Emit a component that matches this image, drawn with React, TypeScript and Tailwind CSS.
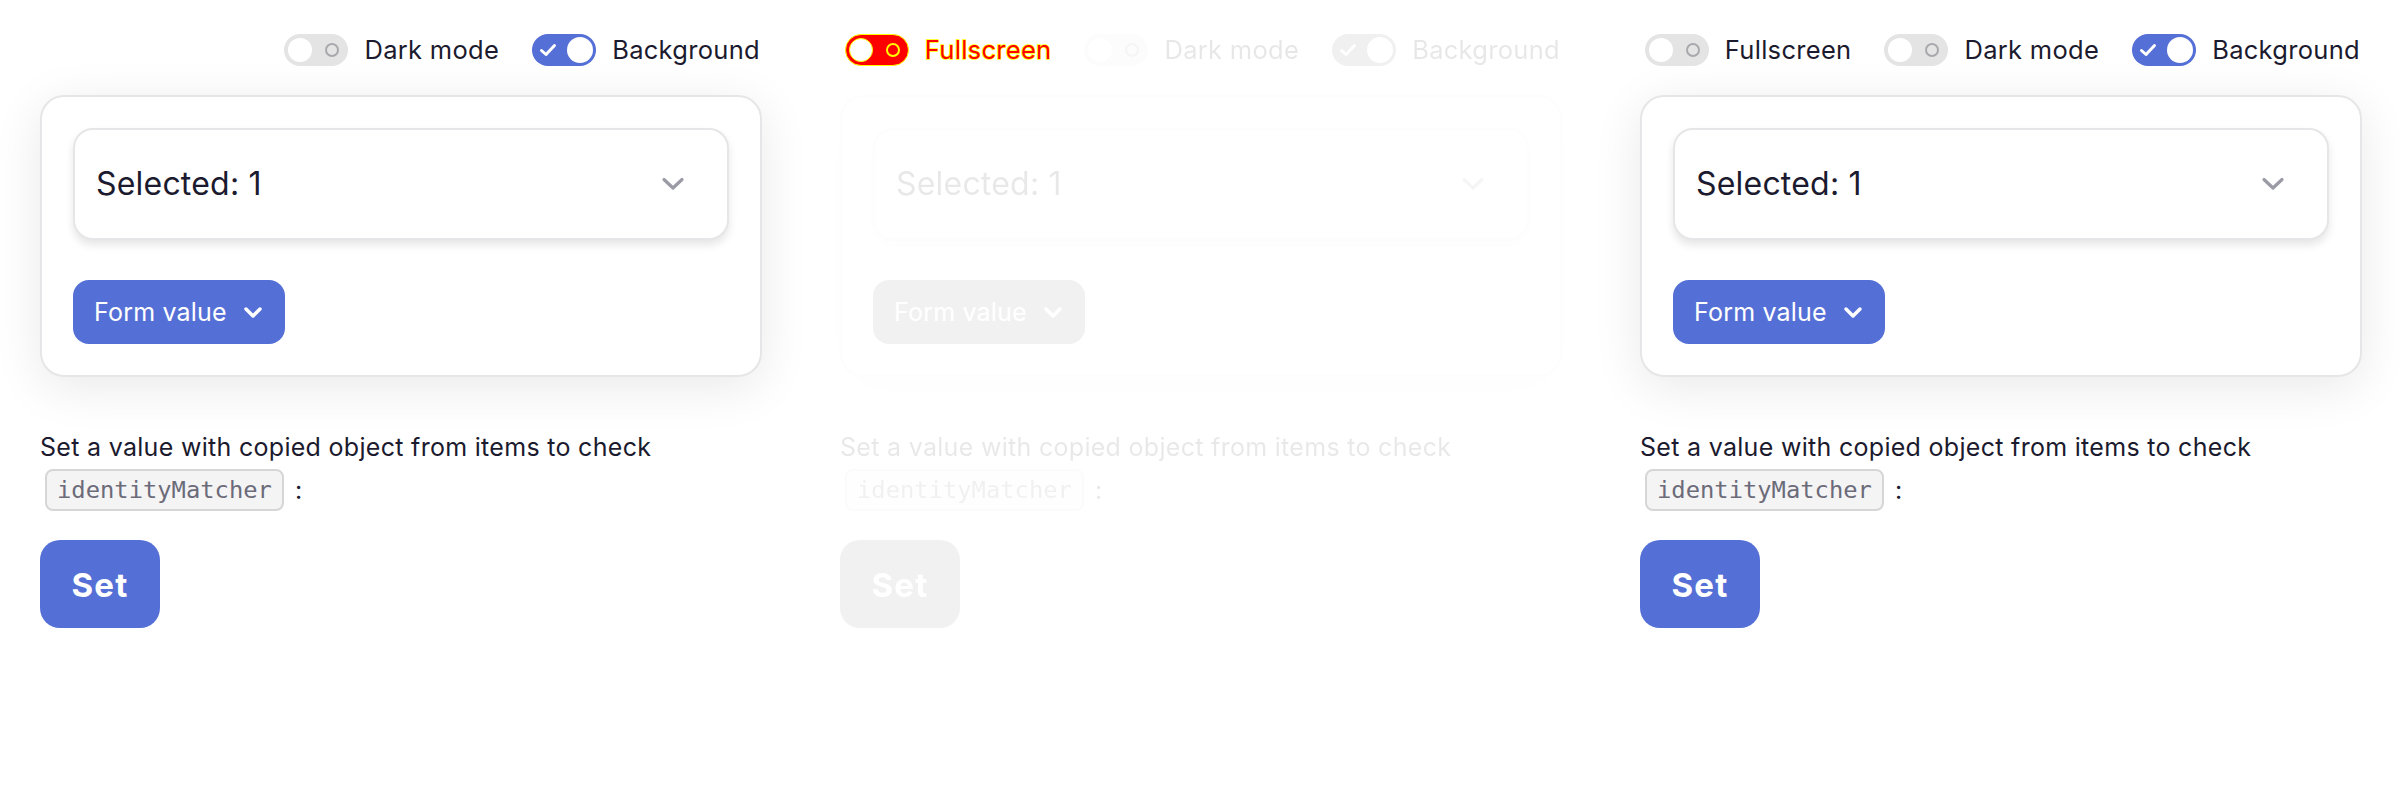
import React from "react";

const BLUE = "bg-[#546fd6]";

function ToggleOff() {
  return (
    <div className="relative h-[32px] w-[64px] shrink-0 rounded-full bg-[#e4e4e4]">
      <div className="absolute left-[4px] top-[4px] h-[24px] w-[24px] rounded-full bg-white" />
      <div className="absolute right-[9px] top-[9px] h-[14px] w-[14px] rounded-full border-2 border-[#a9a9ad]" />
    </div>
  );
}

function ToggleOn() {
  return (
    <div className={`relative h-[32px] w-[64px] shrink-0 rounded-full ${BLUE}`}>
      <svg className="absolute left-[7px] top-[8px]" width="18" height="16" viewBox="0 0 18 16" fill="none">
        <path d="M2.5 8.5 L7 12.5 L15.5 3.5" stroke="white" strokeWidth="3" strokeLinecap="round" strokeLinejoin="round" />
      </svg>
      <div className="absolute right-[3px] top-[3px] h-[26px] w-[26px] rounded-full bg-white" />
    </div>
  );
}

function ToggleAlert() {
  return (
    <div className="relative h-[32px] w-[64px] shrink-0 rounded-full border border-[#ffff00] bg-[#ff0000]">
      <div className="absolute left-[3px] top-[3px] h-[24px] w-[24px] rounded-full border border-[#ffff00] bg-white" />
      <div className="absolute right-[8px] top-[8px] h-[14px] w-[14px] rounded-full border-2 border-[#ffff00] p-[1px]">
        <div className="h-full w-full rounded-full border border-[#ff0000]" />
      </div>
    </div>
  );
}

function Label({ children }: { children: React.ReactNode }) {
  return (
    <span className="whitespace-nowrap text-[25.5px] leading-none tracking-[0.3px] text-[#1b1a2e]">{children}</span>
  );
}

function ChevronDown({ className, color, width = 3 }: { className?: string; color: string; width?: number }) {
  return (
    <svg className={className} width="24" height="14" viewBox="0 0 24 14" fill="none">
      <path d="M3 2.5 L12 11 L21 2.5" stroke={color} strokeWidth={width} strokeLinecap="round" strokeLinejoin="round" />
    </svg>
  );
}

function Body() {
  return (
    <>
      <div className="mt-[29px] rounded-[24px] border-2 border-[#e6e6e8] bg-white p-[31px] shadow-[0_10px_50px_rgba(0,0,0,0.09)]">
        <div className="flex h-[112px] items-center justify-between rounded-[20px] border-2 border-[#e6e6e8] bg-white pl-[21px] pr-[42px] shadow-[0_5px_8px_rgba(0,0,0,0.10)]">
          <span className="text-[32px] leading-none tracking-[0.2px] text-[#1b1a2e]">Selected: 1</span>
          <ChevronDown color="#9b9ba6" width={3.2} />
        </div>
        <div className="mt-[40px] flex">
          <div className={`flex h-[64px] items-center gap-[16px] rounded-[16px] ${BLUE} pl-[21px] pr-[22px]`}>
            <span className="text-[25px] leading-none tracking-[0.2px] text-white">Form value</span>
            <svg width="20" height="13" viewBox="0 0 20 13" fill="none">
              <path d="M3 3 L10 10 L17 3" stroke="white" strokeWidth="3.5" strokeLinecap="round" strokeLinejoin="round" />
            </svg>
          </div>
        </div>
      </div>
      <div className="mt-[54px] flex flex-wrap items-center gap-y-[6px] text-[25px] leading-[32px] tracking-[0.3px] text-[#1b1a2e]">
        <span>Set a value with copied object from items to check</span>
        <span className="ml-[5px] inline-flex h-[42px] items-center rounded-[8px] border-2 border-[#d6d6d8] bg-[#f4f4f5] px-[10px] font-['DejaVu_Sans_Mono',monospace] text-[23.8px] tracking-normal text-[#6c6b7a]">
          identityMatcher
        </span>
        <span className="ml-[11px]">:</span>
      </div>
      <div className="mt-[29px] flex">
        <div className={`flex h-[88px] w-[120px] items-center justify-center rounded-[20px] ${BLUE}`}>
          <span className="mt-[3px] text-[33px] font-bold leading-none tracking-[1.2px] text-white">Set</span>
        </div>
      </div>
    </>
  );
}

function Column({ variant }: { variant: "left" | "middle" | "right" }) {
  const faded = variant === "middle";
  return (
    <div className="w-[800px] shrink-0 pl-[40px] pr-[38px] pt-[34px]">
      <div className="flex h-[32px] flex-nowrap items-center justify-end gap-[33px] pr-[2px]">
        {variant !== "left" && (
          <div className="flex shrink-0 items-center gap-[16px]">
            {faded ? <ToggleAlert /> : <ToggleOff />}
            {faded ? (
              <span className="whitespace-nowrap text-[25.5px] leading-none tracking-[0.3px] text-[#ff0000] [-webkit-text-stroke:1.5px_#ffff00] [paint-order:stroke_fill]">
                Fullscreen
              </span>
            ) : (
              <Label>Fullscreen</Label>
            )}
          </div>
        )}
        <div className={`flex shrink-0 items-center gap-[33px] ${faded ? "opacity-10 grayscale" : ""}`}>
          <div className="flex shrink-0 items-center gap-[16px]">
            <ToggleOff />
            <Label>Dark mode</Label>
          </div>
          <div className="flex shrink-0 items-center gap-[16px]">
            <ToggleOn />
            <Label>Background</Label>
          </div>
        </div>
      </div>
      <div className={faded ? "opacity-10 grayscale" : ""}>
        <Body />
      </div>
    </div>
  );
}

export default function App() {
  return (
    <div className="flex min-h-[800px] w-[2400px] bg-white font-['Inter',sans-serif]">
      <Column variant="left" />
      <Column variant="middle" />
      <Column variant="right" />
    </div>
  );
}
